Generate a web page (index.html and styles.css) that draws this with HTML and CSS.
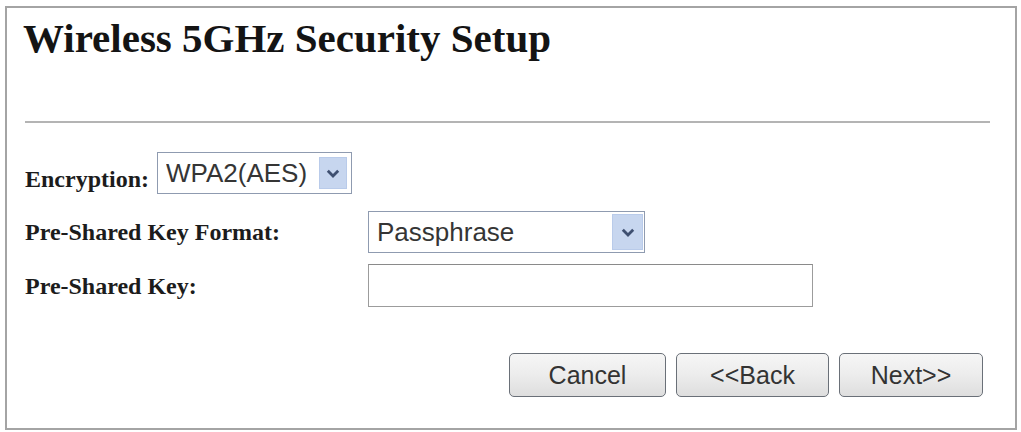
FILE: index.html
```html
<!DOCTYPE html>
<html lang="en">
<head>
  <meta charset="UTF-8">
  <meta name="viewport" content="width=device-width, initial-scale=1.0">
  <title>Wireless 5GHz Security Setup</title>
  <link rel="stylesheet" href="styles.css">
</head>
<body>
  <div class="frame">
    <h1 class="title">Wireless 5GHz Security Setup</h1>
    <hr class="divider">

    <div class="enc-row">
      <label class="label label-enc" for="encryption">Encryption:</label>
      <div class="select-wrap select-enc">
        <select id="encryption" class="select">
          <option>WPA2(AES)</option>
        </select>
        <span class="arrow">
          <svg width="14" height="9" viewBox="0 0 14 9"><path d="M1.8 1.8 L7 7 L12.2 1.8" fill="none" stroke="#3e4f70" stroke-width="2.8"/></svg>
        </span>
      </div>
    </div>

    <div class="form-grid">
      <label class="label label-fmt" for="pskFormat">Pre-Shared Key Format:</label>
      <div class="select-wrap select-fmt">
        <select id="pskFormat" class="select">
          <option>Passphrase</option>
        </select>
        <span class="arrow">
          <svg width="14" height="9" viewBox="0 0 14 9"><path d="M1.8 1.8 L7 7 L12.2 1.8" fill="none" stroke="#3e4f70" stroke-width="2.8"/></svg>
        </span>
      </div>

      <label class="label label-key" for="pskKey">Pre-Shared Key:</label>
      <input type="text" id="pskKey" class="text-input">
    </div>

    <div class="buttons">
      <button class="btn btn-cancel">Cancel</button>
      <button class="btn btn-back">&lt;&lt;Back</button>
      <button class="btn btn-next">Next&gt;&gt;</button>
    </div>
  </div>
</body>
</html>
```

FILE: styles.css
```css
html, body {
  margin: 0;
  padding: 0;
  background: #fff;
}
body {
  width: 1021px;
  height: 432px;
  overflow: hidden;
}
.frame {
  box-sizing: border-box;
  margin: 6px 4px 0 5px;
  height: 424px;
  border: 2px solid #a4a4a4;
  padding: 10px 25px 0 18px;
}
.title {
  margin: 0 0 0 -2px;
  font-family: "Liberation Serif", "Times New Roman", serif;
  font-weight: bold;
  font-size: 41px;
  line-height: 40px;
  color: #141414;
}
.divider {
  margin: 63px 0 0 0;
  border: none;
  border-top: 2px solid #b4b4b4;
  height: 0;
}
.label {
  font-family: "Liberation Serif", "Times New Roman", serif;
  font-weight: bold;
  font-size: 24px;
  line-height: 23px;
  color: #1c1c1c;
}
.enc-row {
  display: flex;
  align-items: center;
  gap: 8px;
  margin-top: 29px;
}
.label-enc {
  padding-top: 12px;
}
.form-grid {
  display: grid;
  grid-template-columns: 343px auto;
  grid-template-rows: 42px 43px;
  row-gap: 11px;
  align-items: center;
  margin-top: 17px;
}
.label-fmt {
  padding-top: 0;
}
.label-key {
  padding-top: 2px;
}
.select-wrap {
  position: relative;
  box-sizing: border-box;
  height: 42px;
  border: 1px solid #8f9bb0;
  background: #fff;
}
.select-enc {
  width: 195px;
}
.select-fmt {
  width: 277px;
}
.select {
  appearance: none;
  -webkit-appearance: none;
  width: 100%;
  height: 100%;
  border: none;
  outline: none;
  background: transparent;
  padding: 0 0 0 8px;
  font-family: "Liberation Sans", Arial, sans-serif;
  font-size: 26px;
  color: #353535;
}
.arrow {
  position: absolute;
  top: 4px;
  right: 4px;
  bottom: 4px;
  width: 28px;
  display: flex;
  align-items: center;
  justify-content: center;
  background: #c7d6ef;
  border: 1px solid #b9cbea;
  box-sizing: border-box;
}
.select-fmt .arrow {
  top: 2px;
  bottom: 2px;
  right: 1px;
  width: 31px;
}
.text-input {
  box-sizing: border-box;
  width: 445px;
  height: 43px;
  border: 1px solid #9c9c9c;
  border-top-color: #8a8a8a;
  background: #fff;
  outline: none;
}
.buttons {
  display: flex;
  justify-content: flex-end;
  gap: 10px;
  margin-top: 46px;
  margin-right: 7px;
}
.btn {
  box-sizing: border-box;
  height: 44px;
  border: 1px solid #6a7078;
  border-radius: 5px;
  background: linear-gradient(#f6f6f6, #ececec 50%, #dedede);
  font-family: "Liberation Sans", Arial, sans-serif;
  font-size: 25px;
  color: #333;
  padding: 0;
  cursor: pointer;
}
.btn-cancel {
  width: 157px;
}
.btn-back {
  width: 153px;
}
.btn-next {
  width: 144px;
}
```
